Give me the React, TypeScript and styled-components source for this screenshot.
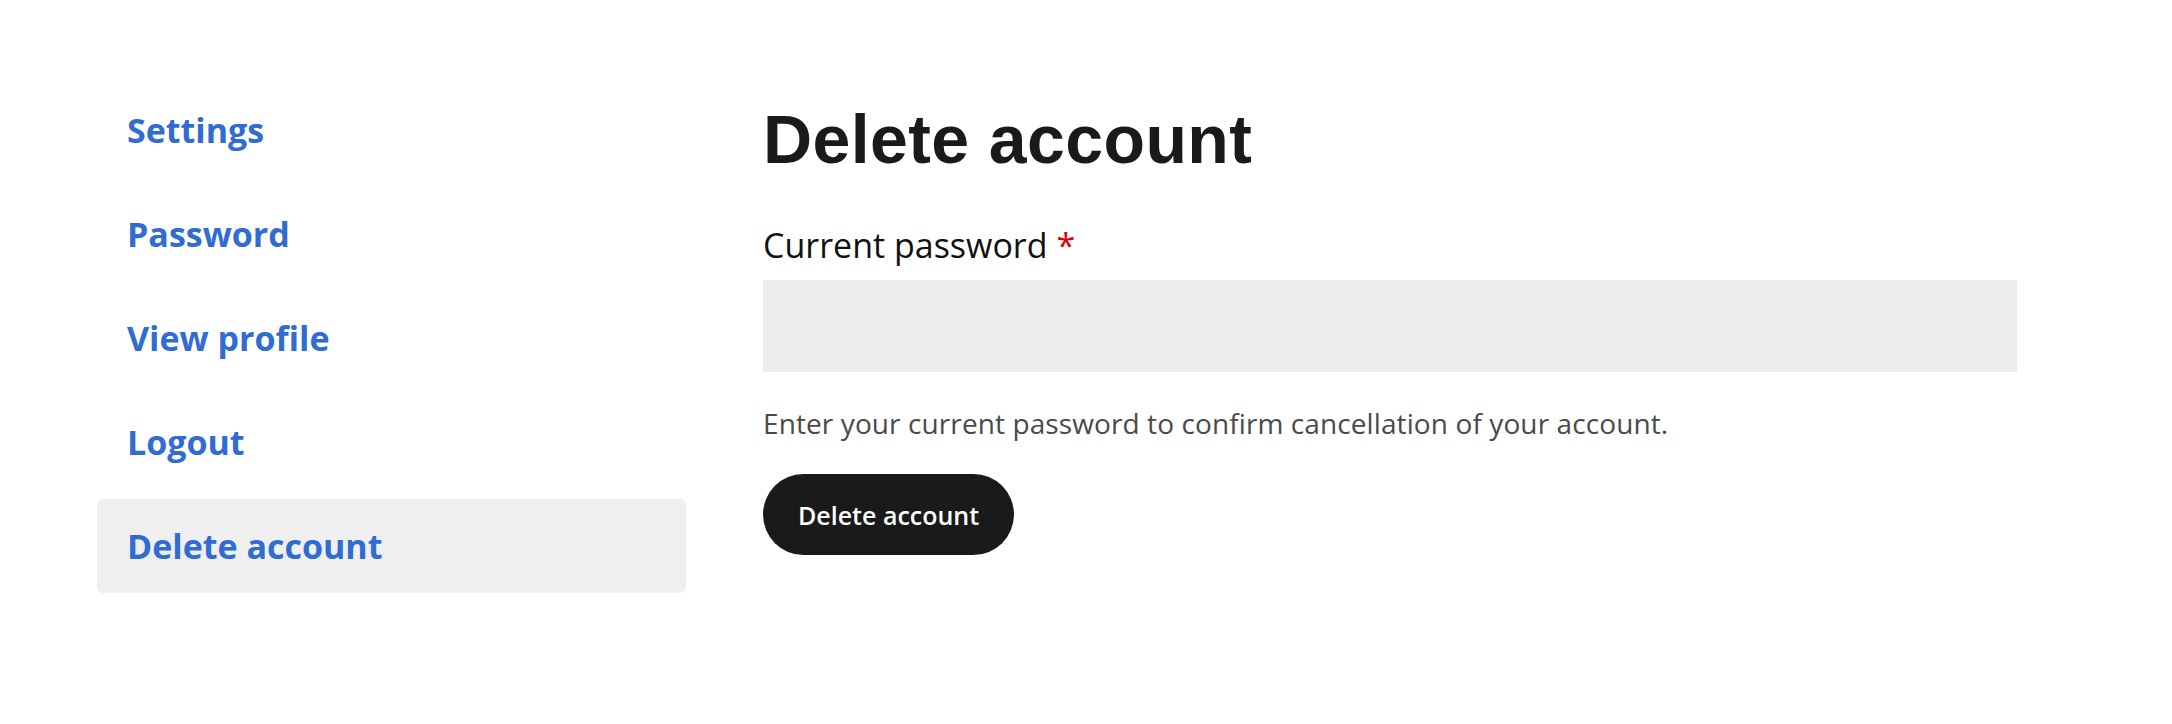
import React from 'react';
import styled, { createGlobalStyle } from 'styled-components';

const GlobalStyle = createGlobalStyle`
  html, body {
    margin: 0;
    padding: 0;
    background: #fff;
  }
  body {
    font-family: 'Open Sans', 'Noto Sans', sans-serif;
    color: #111;
  }
`;

const Page = styled.div`
  display: grid;
  grid-template-columns: 589px 1254px;
  column-gap: 77px;
  padding: 83px 0 0 97px;
`;

const SideNav = styled.nav`
  display: flex;
  flex-direction: column;
  gap: 10px;
`;

const NavItem = styled.a<{ $active?: boolean }>`
  display: flex;
  align-items: center;
  height: 94px;
  padding-left: 30px;
  border-radius: 6px;
  background: ${(p) => (p.$active ? '#efefef' : 'transparent')};
  color: #306cd2;
  font-size: 34px;
  font-weight: 700;
  text-decoration: none;
  cursor: pointer;
`;

const Main = styled.main`
  display: flex;
  flex-direction: column;
  padding-top: 16px;
`;

const Heading = styled.h1`
  margin: 0;
  font-family: 'Liberation Sans', Arial, sans-serif;
  font-size: 68px;
  line-height: 80px;
  font-weight: 700;
  letter-spacing: 0.4px;
  color: #1a1a1a;
`;

const Field = styled.div`
  display: flex;
  flex-direction: column;
  margin-top: 41px;
`;

const Label = styled.label`
  font-size: 34px;
  line-height: 50px;
  color: #111;
`;

const Required = styled.span`
  color: #e00000;
  margin-left: 9px;
`;

const Input = styled.input`
  box-sizing: border-box;
  margin-top: 10px;
  height: 92px;
  width: 100%;
  border: none;
  border-radius: 0;
  background: #ebecee;
  font-size: 28px;
  padding: 0 20px;
  outline: none;
`;

const Help = styled.p`
  margin: 30px 0 0;
  font-size: 28px;
  line-height: 42px;
  letter-spacing: 0.1px;
  color: #4a4a4a;
`;

const Button = styled.button`
  align-self: flex-start;
  margin-top: 30px;
  height: 81px;
  padding: 0 35px;
  border: none;
  border-radius: 41px;
  background: #1a1a1a;
  color: #fff;
  font-family: 'Open Sans', 'Noto Sans', sans-serif;
  font-size: 25px;
  font-weight: 600;
  cursor: pointer;
`;

const navItems = ['Settings', 'Password', 'View profile', 'Logout', 'Delete account'];

export default function App() {
  return (
    <>
      <GlobalStyle />
      <Page>
        <SideNav>
          {navItems.map((item) => (
            <NavItem key={item} $active={item === 'Delete account'}>
              {item}
            </NavItem>
          ))}
        </SideNav>
        <Main>
          <Heading>Delete account</Heading>
          <Field>
            <Label htmlFor='current-pass'>
              Current password<Required>*</Required>
            </Label>
            <Input id='current-pass' type='password' />
          </Field>
          <Help>Enter your current password to confirm cancellation of your account.</Help>
          <Button type='button'>Delete account</Button>
        </Main>
      </Page>
    </>
  );
}
